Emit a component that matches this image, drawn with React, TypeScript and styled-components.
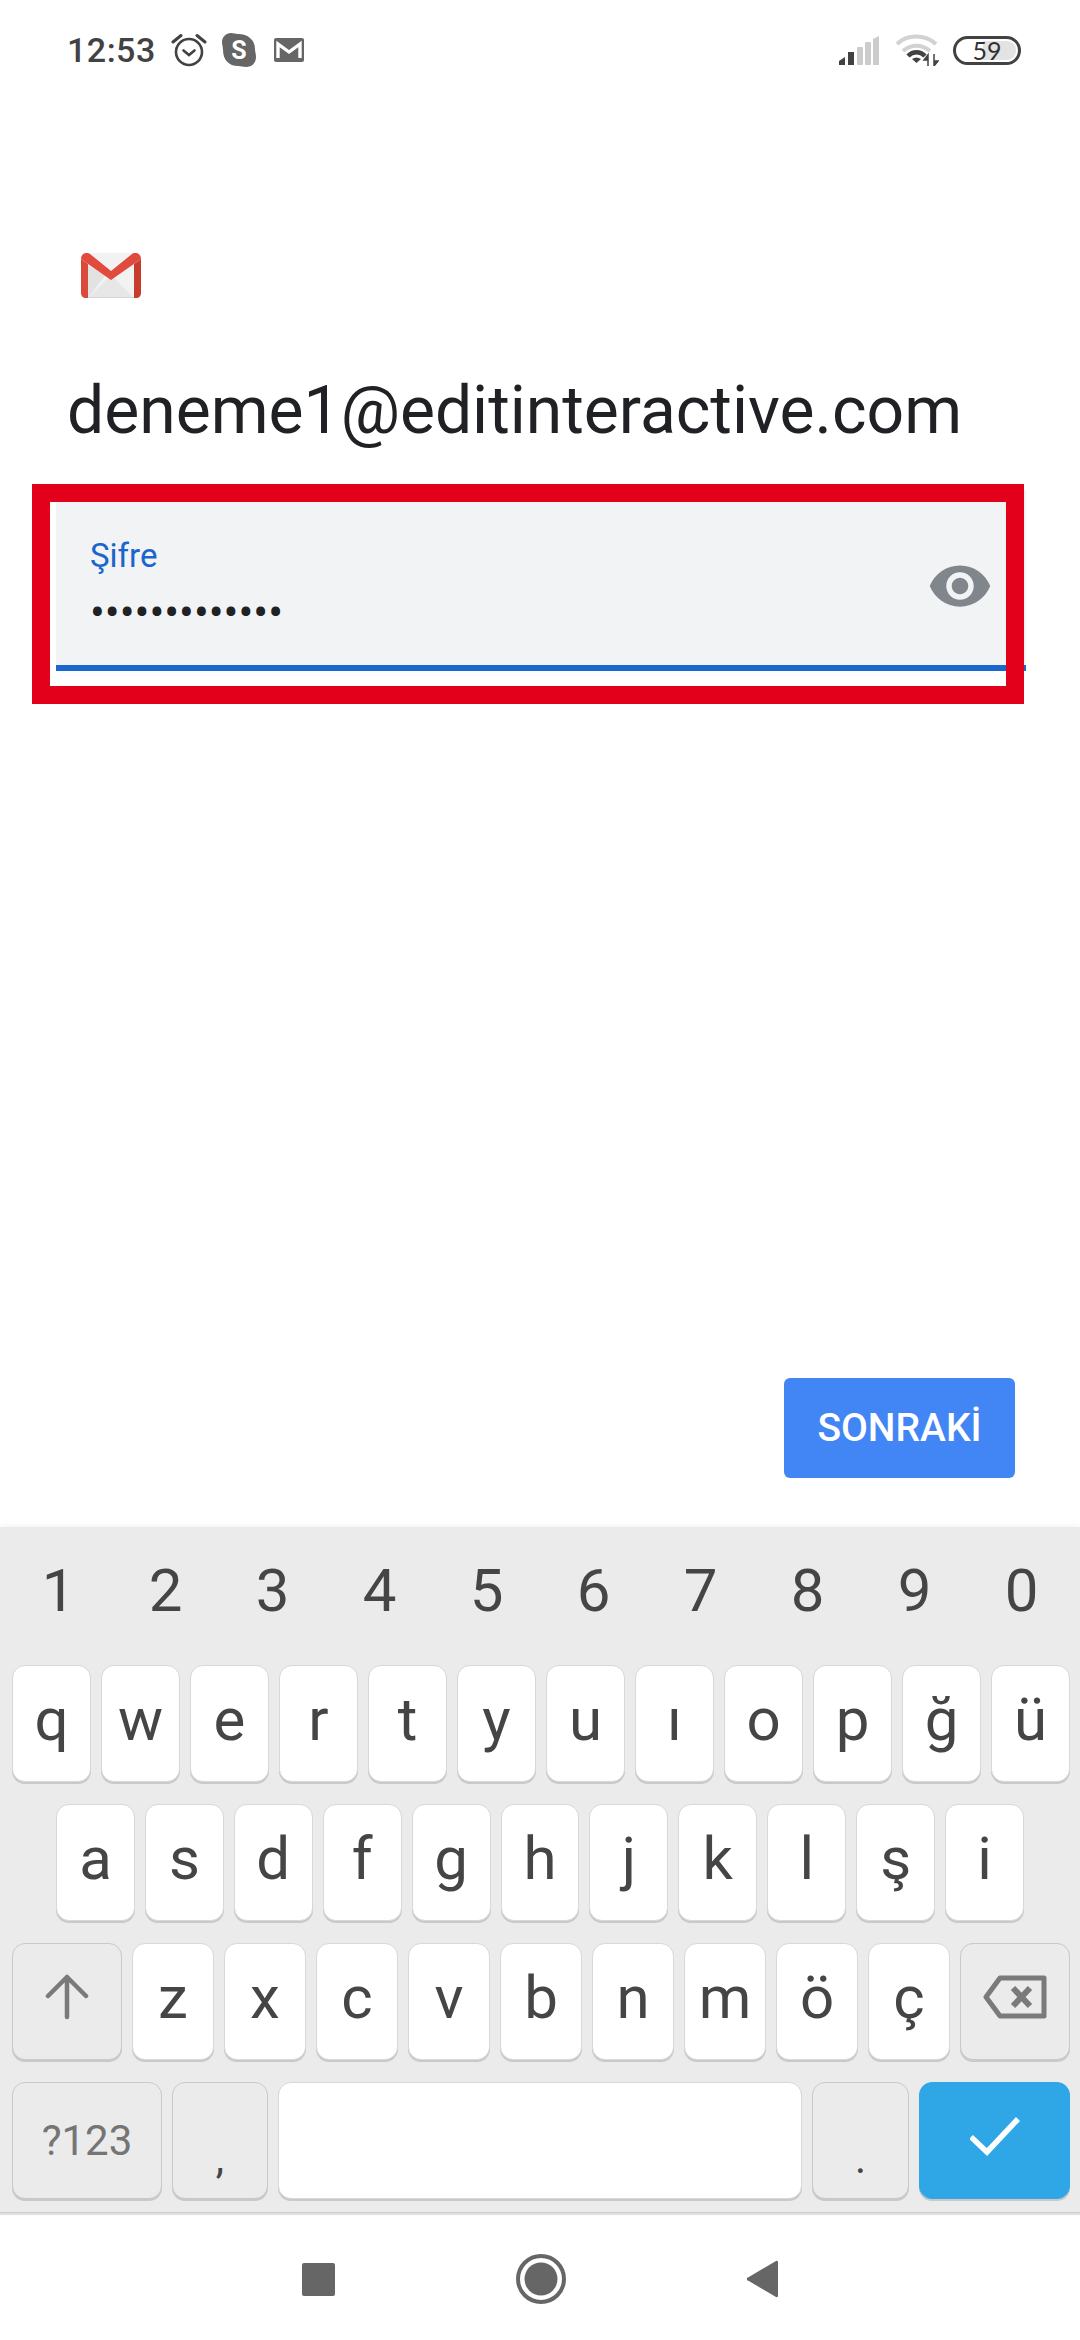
import React from "react";
import styled, { createGlobalStyle } from "styled-components";

const GlobalStyle = createGlobalStyle`
  html, body {
    margin: 0;
    padding: 0;
    background: #fff;
  }

  * {
    box-sizing: border-box;
  }
`;

const Screen = styled.div`
  width: 1080px;
  height: 2340px;
  display: flex;
  flex-direction: column;
  background: #fff;
  font-family: Roboto, "Liberation Sans", sans-serif;
  overflow: hidden;
`;

const StatusBar = styled.div`
  height: 100px;
  flex: none;
  display: flex;
  align-items: center;
  justify-content: space-between;
  padding: 0 59px 0 67px;
`;

const StatusGroup = styled.div`
  display: flex;
  align-items: center;
`;

const Clock = styled.span`
  font-size: 34px;
  font-weight: 500;
  color: #424242;
  margin-right: 15px;
  letter-spacing: 0.5px;
`;

const Battery = styled.div`
  position: relative;
  width: 68px;
  height: 29px;
  display: flex;
  align-items: center;
  justify-content: center;
  border: 3px solid #424242;
  border-radius: 15px;
`;

const BatteryFill = styled.div`
  position: absolute;
  top: 2px;
  bottom: 2px;
  right: 2px;
  width: 33px;
  border-radius: 0 9px 9px 0;
  background: #e3e3e3;
`;

const BatteryLevel = styled.span`
  position: relative;
  font-family: Lato, Roboto, sans-serif;
  font-size: 25px;
  line-height: 23px;
  color: #303030;
`;

const Main = styled.main`
  flex: 1;
  display: flex;
  flex-direction: column;
  padding-top: 153px;
`;

const Logo = styled.svg`
  width: 60px;
  height: 45px;
  margin-left: 81px;
  display: block;
`;

const Email = styled.div`
  margin: 83px 0 49px 67px;
  font-size: 66px;
  line-height: 60px;
  color: #202124;
`;

const Field = styled.div`
  position: relative;
  width: 970px;
  height: 181px;
  margin-left: 56px;
  padding: 0 33px 0 34px;
  display: flex;
  align-items: center;
  justify-content: space-between;
  background: #f1f3f4;
  border-bottom: 6px solid #1a66cc;
`;

const FieldText = styled.div`
  display: flex;
  flex-direction: column;
  padding-top: 15px;
`;

const FieldLabel = styled.label`
  font-size: 33px;
  line-height: 40px;
  color: #1a66cc;
`;

const Dots = styled.div`
  font-size: 44px;
  line-height: 44px;
  color: #202124;
  margin-top: 15px;
`;

const EyeSvg = styled.svg`
  margin-top: 16px;
  fill: #80868b;
`;

const Highlight = styled.div`
  position: absolute;
  left: -24px;
  top: -6px;
  width: 992px;
  height: 220px;
  border: 18px solid #e2001a;
`;

const ActionRow = styled.div`
  margin-top: auto;
  padding: 0 65px 49px 0;
  display: flex;
  justify-content: flex-end;
`;

const NextButton = styled.button`
  width: 231px;
  height: 100px;
  border: none;
  border-radius: 6px;
  background: #4285f4;
  color: #fff;
  font-family: inherit;
  font-size: 39px;
  font-weight: 500;
  padding: 0;
`;

const Keyboard = styled.div`
  height: 688px;
  flex: none;
  display: flex;
  flex-direction: column;
  background: #ebebeb;
  border-bottom: 2px solid #e0e0e0;
  box-shadow: 0 -2px 4px rgba(0, 0, 0, 0.04), inset 0 -1px 0 #cccccc;
`;

const NumberRow = styled.div`
  height: 138px;
  flex: none;
  padding: 0 5px 12px;
  display: grid;
  grid-template-columns: repeat(10, 107px);
  align-items: center;
`;

const NumberKey = styled.span`
  text-align: center;
  font-size: 60px;
  color: #454545;
`;

const KeyRows = styled.div`
  display: flex;
  flex-direction: column;
  gap: 22px;
`;

const KeyRow = styled.div<{ $inset?: number }>`
  display: flex;
  gap: 10px;
  height: 117px;
  padding: 0 ${(p) => p.$inset ?? 10}px 0 ${(p) => p.$inset ?? 12}px;
`;

const Key = styled.div<{ $width?: number; $variant?: "letter" | "fn" | "enter" }>`
  flex: ${(p) => (p.$width ? `0 0 ${p.$width}px` : "1 1 0")};
  min-width: 0;
  display: flex;
  align-items: center;
  justify-content: center;
  padding-bottom: 9px;
  border-radius: 13px;
  font-size: 60px;
  color: #454545;
  background: ${(p) =>
    p.$variant === "fn" ? "#ebebeb" : p.$variant === "enter" ? "#2fa6e6" : "#fff"};
  border: 1px solid ${(p) => (p.$variant === "enter" ? "#2fa6e6" : p.$variant === "fn" ? "#c9c9c9" : "#d8d8d8")};
  box-shadow: 0 2px 0 #c9c9c9;
`;

const SymbolsLabel = styled.span`
  font-size: 42px;
  color: #757575;
  padding-top: 9px;
`;

const PunctuationLabel = styled.span`
  font-size: 42px;
  color: #454545;
  padding-top: 44px;
`;

const NavBar = styled.nav`
  height: 125px;
  flex: none;
  display: flex;
  align-items: center;
  gap: 181px;
  padding: 3px 0 0 302px;
`;

const NavIcon = styled.svg`
  display: block;
  fill: #666;
`;

const RowOne = ["q", "w", "e", "r", "t", "y", "u", "ı", "o", "p", "ğ", "ü"];
const RowTwo = ["a", "s", "d", "f", "g", "h", "j", "k", "l", "ş", "i"];
const RowThree = ["z", "x", "c", "v", "b", "n", "m", "ö", "ç"];
const Numbers = ["1", "2", "3", "4", "5", "6", "7", "8", "9", "0"];

const AlarmIcon = () => (
  <svg width="36" height="34" viewBox="0 0 36 34" fill="none" stroke="#424242" strokeWidth="2.6" strokeLinecap="round" style={{ marginRight: 15 }}>
    <circle cx="18" cy="19" r="13" />
    <path d="M2 9 10 2.5M34 9 26 2.5" strokeWidth="3" />
    <path d="M12.5 17.5 18 22l5.5-4.5" />
  </svg>
);

const SkypeIcon = () => (
  <svg width="34" height="34" viewBox="0 0 34 34" style={{ marginRight: 18 }}>
    <path d="M9 0c3 0 4 1 7 1 10 0 17 6 17 15 0 3 1 4 1 8 0 6-4 10-10 10-3 0-5-1-8-1C7 33 1 27 1 17c0-3-1-5-1-8 0-5 4-9 9-9z" fill="#666" />
    <text x="17" y="26" textAnchor="middle" fontFamily="Roboto, sans-serif" fontSize="25" fontWeight="700" fill="#fff">S</text>
  </svg>
);

const MailIcon = () => (
  <svg width="30" height="24" viewBox="0 0 30 24">
    <path d="M2 0h26a2 2 0 0 1 2 2v20a2 2 0 0 1-2 2H2a2 2 0 0 1-2-2V2a2 2 0 0 1 2-2z" fill="#666" />
    <path d="M4 20V6l11 8 11-8v14" fill="none" stroke="#fff" strokeWidth="3.4" />
  </svg>
);

const SignalIcon = () => (
  <svg width="40" height="29" viewBox="0 0 40 29" style={{ marginRight: 16 }}>
    <path d="M0 29v-4l6-4v8z" fill="#424242" />
    <rect x="9" y="16" width="6" height="13" fill="#424242" />
    <rect x="18" y="11" width="6" height="18" rx="1" fill="#ccc" />
    <rect x="26" y="6" width="6" height="23" rx="1" fill="#ccc" />
    <path d="M34 3l6-3v29h-6z" fill="#ccc" />
  </svg>
);

const WifiIcon = () => (
  <svg width="44" height="32" viewBox="0 0 44 32" fill="none" style={{ marginRight: 14 }}>
    <path d="M2 10C12 0 30 0 41 10" stroke="#d2d2d2" strokeWidth="4" />
    <path d="M8 17c8-7 19-7 27 0" stroke="#d2d2d2" strokeWidth="4" />
    <path d="M13 22c5-5 12-5 17 0" stroke="#424242" strokeWidth="4.5" />
    <path d="M17 25c3-2 6-2 9 0l-4.500 4z" fill="#424242" />
    <path d="M33 32V21l-4 5h4M39 20v12l4-5h-4" fill="#424242" stroke="#424242" strokeWidth="1.500" />
  </svg>
);

const GmailLogo = () => (
  <Logo viewBox="0 0 60 45">
    <path d="M7 0h46l3 4v41H4V4z" fill="#f2f2f2" />
    <path d="M7 45 30 22l23 23z" fill="#e7e7e7" />
    <path d="M7 13v32l19-25z" fill="#e2e2e2" />
    <path d="M7 44h46v1H7z" fill="#d6d6d6" />
    <path d="M0 6c0-5 5-8 9-5l21 17L51 1c4-3 9 0 9 5L30 27z" fill="#e14b3e" />
    <path d="M0 6v34c0 3 2 5 5 5h2V11z" fill="#d9493c" />
    <path d="M60 6v34c0 3-2 5-5 5h-2V11z" fill="#c63d2e" />
  </Logo>
);

const EyeIcon = () => (
  <EyeSvg width="66" height="66" viewBox="0 0 24 24">
    <path d="M12 4.5C7 4.500 2.730 7.610 1 12c1.730 4.390 6 7.500 11 7.500s9.270-3.110 11-7.500c-1.730-4.390-6-7.500-11-7.500zM12 17c-2.760 0-5-2.240-5-5s2.240-5 5-5 5 2.240 5 5-2.240 5-5 5zm0-8c-1.660 0-3 1.340-3 3s1.340 3 3 3 3-1.340 3-3-1.340-3-3-3z" />
  </EyeSvg>
);

const App = () => {
  return (
    <Screen>
      <GlobalStyle />
      <StatusBar>
        <StatusGroup>
          <Clock>12:53</Clock>
          <AlarmIcon />
          <SkypeIcon />
          <MailIcon />
        </StatusGroup>
        <StatusGroup>
          <SignalIcon />
          <WifiIcon />
          <Battery>
            <BatteryFill />
            <BatteryLevel>59</BatteryLevel>
          </Battery>
        </StatusGroup>
      </StatusBar>

      <Main>
        <GmailLogo />
        <Email>deneme1@editinteractive.com</Email>
        <Field>
          <FieldText>
            <FieldLabel>Şifre</FieldLabel>
            <Dots>•••••••••••••</Dots>
          </FieldText>
          <EyeIcon />
          <Highlight />
        </Field>
        <ActionRow>
          <NextButton>SONRAKİ</NextButton>
        </ActionRow>
      </Main>

      <Keyboard>
        <NumberRow>
          {Numbers.map((n) => (
            <NumberKey key={n}>{n}</NumberKey>
          ))}
        </NumberRow>
        <KeyRows>
          <KeyRow>
            {RowOne.map((k) => (
              <Key key={k}>{k}</Key>
            ))}
          </KeyRow>
          <KeyRow $inset={56}>
            {RowTwo.map((k) => (
              <Key key={k}>{k}</Key>
            ))}
          </KeyRow>
          <KeyRow>
            <Key $width={110} $variant="fn">
              <svg width="44" height="46" viewBox="0 0 44 46" fill="none" stroke="#7a7a7a" strokeWidth="4.5" strokeLinecap="round" strokeLinejoin="round">
                <path d="M22 43V3M3 22 22 3l19 19" />
              </svg>
            </Key>
            {RowThree.map((k) => (
              <Key key={k}>{k}</Key>
            ))}
            <Key $width={110} $variant="fn">
              <svg width="64" height="44" viewBox="0 0 64 44" fill="none" stroke="#7a7a7a" strokeWidth="5" strokeLinejoin="round">
                <path d="M17 3h44v38H17L3 22z" />
                <path d="M30 13l17 18M47 13 30 31" strokeWidth="6" />
              </svg>
            </Key>
          </KeyRow>
          <KeyRow>
            <Key $width={150} $variant="fn">
              <SymbolsLabel>?123</SymbolsLabel>
            </Key>
            <Key $width={96} $variant="fn">
              <PunctuationLabel>,</PunctuationLabel>
            </Key>
            <Key />
            <Key $width={97} $variant="fn">
              <PunctuationLabel>.</PunctuationLabel>
            </Key>
            <Key $width={151} $variant="enter">
              <svg width="50" height="40" viewBox="0 0 50 40" fill="none" stroke="#fff" strokeWidth="5.500">
                <path d="M1 21l16 15L48 3" />
              </svg>
            </Key>
          </KeyRow>
        </KeyRows>
      </Keyboard>

      <NavBar>
        <NavIcon width="33" height="33" viewBox="0 0 33 33">
          <rect width="33" height="33" rx="2" />
        </NavIcon>
        <NavIcon width="50" height="50" viewBox="0 0 50 50">
          <circle cx="25" cy="25" r="16.500" />
          <circle cx="25" cy="25" r="23" fill="none" stroke="#666" strokeWidth="4" />
        </NavIcon>
        <NavIcon width="31" height="38" viewBox="0 0 31 38">
          <path d="M29 1 1 17.500a1.500 1.500 0 0 0 0 3L29 37a1.500 1.500 0 0 0 2-1V2a1.500 1.500 0 0 0-2-1z" />
        </NavIcon>
      </NavBar>
    </Screen>
  );
};

export default App;
